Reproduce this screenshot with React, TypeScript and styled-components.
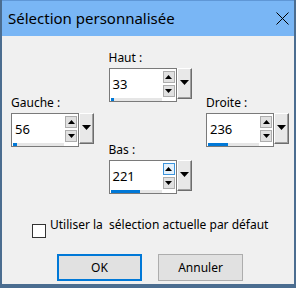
import React from 'react';
import styled, { createGlobalStyle } from 'styled-components';

const GlobalStyle = createGlobalStyle`
  body {
    margin: 0;
    background: #4b6d90;
  }
  * {
    box-sizing: border-box;
  }
`;

interface SpinData {
  label: string;
  value: number;
  fill: number;
  hoverUp?: boolean;
}

function Spin({ label, value, fill, hoverUp }: SpinData) {
  return (
    <SpinBlock>
      <Label>{label}</Label>
      <SpinRow>
        <Field>
          <ValueArea>
            <Value>{value}</Value>
            <Track>
              <Fill style={{ width: fill }} />
            </Track>
          </ValueArea>
          <Arrows>
            <ArrowButton hover={hoverUp}>
              <svg width="7" height="4" viewBox="0 0 7 4">
                <path d="M0 4 L3.5 0 L7 4 Z" fill="#000" />
              </svg>
            </ArrowButton>
            <ArrowButton>
              <svg width="7" height="4" viewBox="0 0 7 4">
                <path d="M0 0 L3.5 4 L7 0 Z" fill="#000" />
              </svg>
            </ArrowButton>
          </Arrows>
        </Field>
        <DropButton>
          <svg width="9" height="5" viewBox="0 0 9 5">
            <path d="M0 0 L4.5 5 L9 0 Z" fill="#000" />
          </svg>
        </DropButton>
      </SpinRow>
    </SpinBlock>
  );
}

export default function App() {
  return (
    <>
      <GlobalStyle />
      <Window>
        <TitleBar>
          <Title>Sélection personnalisée</Title>
          <svg width="13" height="13" viewBox="0 0 13 13">
            <path d="M0.5 0.5 L12.5 12.5 M12.5 0.5 L0.5 12.5" stroke="#000" strokeWidth="1" />
          </svg>
        </TitleBar>
        <Body>
          <Columns>
            <SideColumn>
              <Spin label="Gauche :" value={56} fill={4} />
            </SideColumn>
            <CenterColumn>
              <Spin label="Haut :" value={33} fill={3} />
              <Spin label="Bas :" value={221} fill={29} hoverUp />
            </CenterColumn>
            <SideColumn>
              <Spin label="Droite :" value={236} fill={20} />
            </SideColumn>
          </Columns>
          <CheckRow>
            <CheckBox />
            <CheckText>Utiliser la&nbsp; sélection actuelle par défaut</CheckText>
          </CheckRow>
          <ButtonRow>
            <Button primary>OK</Button>
            <Button>Annuler</Button>
          </ButtonRow>
        </Body>
      </Window>
    </>
  );
}

const Window = styled.div`
  width: 296px;
  height: 288px;
  display: flex;
  flex-direction: column;
  border-left: 2px solid #4b6d90;
  border-right: 2px solid #4b6d90;
  border-bottom: 4px solid #4b6d90;
  font-family: 'Noto Sans', 'Open Sans', sans-serif;
  color: #000;
`;

const TitleBar = styled.div`
  height: 36px;
  flex: none;
  display: flex;
  align-items: center;
  justify-content: space-between;
  padding: 0 5px 0 6px;
  background: #79b6f5;
  border-top: 1px solid #5f97d6;
`;

const Title = styled.span`
  font-size: 15px;
  line-height: 20px;
  margin-top: -1px;
`;

const Body = styled.div`
  flex: 1;
  display: flex;
  flex-direction: column;
  background: #f0f0f0;
  padding: 14px 5px 0 9px;
`;

const Columns = styled.div`
  display: flex;
  justify-content: space-between;
`;

const SideColumn = styled.div`
  padding-top: 45px;
`;

const CenterColumn = styled.div`
  display: flex;
  flex-direction: column;
  gap: 40px;
`;

const SpinBlock = styled.div`
  display: flex;
  flex-direction: column;
  gap: 2px;
`;

const Label = styled.span`
  font-size: 12px;
  line-height: 16px;
`;

const SpinRow = styled.div`
  display: flex;
  align-items: flex-start;
`;

const Field = styled.div`
  width: 68px;
  height: 34px;
  display: flex;
  background: #fff;
  border: 1px solid #7a7a7a;
`;

const ValueArea = styled.div`
  flex: 1;
  display: flex;
  flex-direction: column;
`;

const Value = styled.span`
  flex: 1;
  display: flex;
  align-items: center;
  padding-left: 3px;
  font-size: 13px;
`;

const Track = styled.div`
  width: 51px;
  height: 3px;
  margin: 0 0 0 1px;
  background: #e6e6e6;
`;

const Fill = styled.div`
  height: 100%;
  background: #0078d7;
`;

const Arrows = styled.div`
  display: flex;
  flex-direction: column;
  gap: 2px;
  padding: 2px 1px 0 0;
`;

const ArrowButton = styled.div<{ hover?: boolean }>`
  width: 12px;
  height: 12px;
  display: flex;
  align-items: center;
  justify-content: center;
  background: ${({ hover }) => (hover ? '#e5f1fb' : '#e1e1e1')};
  border: 1px solid ${({ hover }) => (hover ? '#3d95dd' : '#adadad')};
`;

const DropButton = styled.div`
  width: 15px;
  height: 31px;
  display: flex;
  align-items: center;
  justify-content: center;
  padding-bottom: 2px;
  background: #e8e8e8;
  border-top: 1px solid #fff;
  border-left: 1px solid #fff;
  border-right: 1px solid #6d6d6d;
  border-bottom: 1px solid #6d6d6d;
  box-shadow: inset -1px -1px 0 #a0a0a0;
`;

const CheckRow = styled.div`
  display: flex;
  align-items: flex-start;
  margin-top: 23px;
  padding-left: 21px;
`;

const CheckBox = styled.div`
  width: 14px;
  height: 14px;
  margin-top: 7px;
  background: #fff;
  border: 1px solid #333;
`;

const CheckText = styled.span`
  font-size: 12px;
  line-height: 16px;
  margin-left: 4px;
`;

const ButtonRow = styled.div`
  display: flex;
  gap: 16px;
  margin-top: 16px;
  padding-left: 46px;
`;

const Button = styled.div<{ primary?: boolean }>`
  width: 85px;
  height: 27px;
  display: flex;
  align-items: center;
  justify-content: center;
  font-size: 12px;
  background: #e1e1e1;
  border: ${({ primary }) => (primary ? '2px solid #0078d7' : '1px solid #adadad')};
`;
